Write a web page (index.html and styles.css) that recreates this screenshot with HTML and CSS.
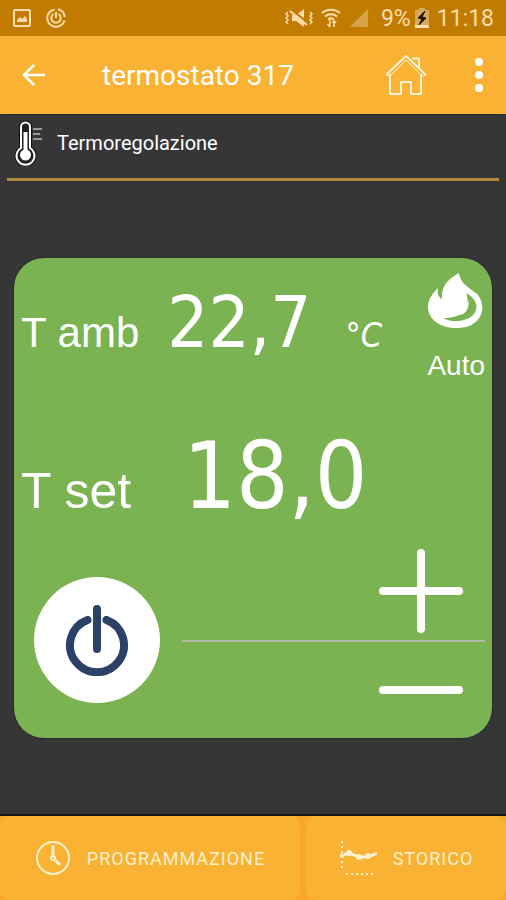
FILE: index.html
```
<!DOCTYPE html>
<html lang="it">
<head>
    <meta charset="UTF-8">
    <meta name="viewport" content="width=device-width, initial-scale=1.0">
    <title>termostato 317</title>
    <link rel="stylesheet" href="styles.css">
</head>
<body>
    <div class="status-bar">
        <div class="status-group">
            <svg width="20" height="20" viewBox="0 0 20 20" fill="none" stroke="currentColor" stroke-width="2">
                <rect x="2" y="2" width="16" height="16" rx="1"/>
                <path d="M5 14v-2l3-3 2 2 3-3 2 3v3z" fill="currentColor" stroke="none"/>
            </svg>
            <svg width="20" height="20" viewBox="0 0 20 20" fill="none" stroke="currentColor" stroke-width="2">
                <path d="M12 1.3A8.8 8.8 0 0 1 18.7 9M18.5 12.5A8.8 8.8 0 1 1 8.5 1.4"/>
                <path d="M7.5 6A4.7 4.7 0 1 0 12.500 6M10 4v6"/>
            </svg>
        </div>
        <div class="status-group">
            <svg class="mute" width="28" height="20" viewBox="0 0 28 20">
                <path d="M7 7h4l8-6v18l-8-6H7z" fill="currentColor"/>
                <path d="M6 1l17 14" stroke="#c17c00" stroke-width="2"/>
                <path d="M5 3l17 14" stroke="currentColor" stroke-width="2"/>
                <path d="M3 4l-2 2 2 2-2 2 2 2-2 2 2 2M25 4l2 2-2 2 2 2-2 2 2 2-2 2" fill="none" stroke="currentColor" stroke-width="1.500"/>
            </svg>
            <svg class="wifi" width="20" height="20" viewBox="0 0 20 20" fill="none" stroke="currentColor" stroke-width="2">
                <path d="M1 5c5-4.500 13-4.500 18 0M4 8.500c3.500-3 8.500-3 12 0M7 11.500c2-1.500 4-1.500 6 0"/>
                <path d="M9 12v6M6.500 16L9 19M13 19v-6M11.500 15l1.500-2 2 2" stroke-width="1.500"/>
            </svg>
            <svg class="signal" width="20" height="20" viewBox="0 0 20 20"><path d="M19 1v18H1z" fill="currentColor"/></svg>
            <span>9%</span>
            <svg width="14" height="20" viewBox="0 0 14 20">
                <path d="M0 2h4V0h6v2h4v18H0z" fill="#d9a85a"/>
                <path d="M0 17h14v3H0z" fill="currentColor"/>
                <path d="M10 3L3 10l4 1-3 6 7-7-4-1z" fill="#1d1200" stroke="#1d1200"/>
            </svg>
            <span class="clock">11:18</span>
        </div>
    </div>

    <header class="app-bar">
        <button class="icon-btn" aria-label="Indietro">
            <svg width="24" height="24" viewBox="0 0 24 24" fill="none" stroke="currentColor" stroke-width="2.500"><path d="M23 12H2M12 2L2 12l10 10"/></svg>
        </button>
        <h1>termostato 317</h1>
        <button class="icon-btn home-btn" aria-label="Home">
            <svg width="44" height="42" viewBox="0 0 44 42" fill="none" stroke="#fff3d6" stroke-width="2" stroke-linejoin="round">
                <path d="M6 20v20h11V28h10v12h10V20M2 21L22 2l20 19M28 4.500h7v9"/>
                <path d="M2 21l4 1L22 6l16 16 4-1" stroke-width="1"/>
            </svg>
        </button>
        <button class="icon-btn" aria-label="Menu">
            <svg width="10" height="36" viewBox="0 0 10 36" fill="currentColor"><circle cx="5" cy="5" r="4"/><circle cx="5" cy="18" r="4"/><circle cx="5" cy="31" r="4"/></svg>
        </button>
    </header>

    <section class="section-title">
        <svg width="30" height="46" viewBox="0 0 30 46">
            <path d="M7 28V7a4.500 4.500 0 0 1 9 0v21a9 9 0 1 1-9 0z" fill="#222" stroke="#111" stroke-width="4"/>
            <path d="M7 28V7a4.500 4.500 0 0 1 9 0v21a9 9 0 1 1-9 0z" fill="#222" stroke="#fff" stroke-width="2"/>
            <path d="M11.500 12v23" stroke="#fff" stroke-width="4"/>
            <circle cx="11.500" cy="35" r="5.500" fill="#fff"/>
            <path d="M19 9h9M19 14h7M19 19h9" stroke="#999" stroke-width="2"/>
        </svg>
        <h2>Termoregolazione</h2>
    </section>

    <main>
        <div class="thermostat">
            <div class="row ambient">
                <span class="label">T amb</span>
                <span class="lcd">22,7</span>
                <span class="unit">°C</span>
                <div class="mode">
                    <svg width="56" height="56" viewBox="0 0 56 56">
                        <path d="M31 1C32 11 41 16 49 22C60 34 54 55 31 56C12 57 0 47 0 35C0 27 5 21 10 16C9 22 11 26 14 27C13 14 20 7 31 1Z" fill="#fff"/>
                        <path d="M38 21C48 26 52 36 45 43C38 50 23 51 15 46C24 46 31 45 35 39C39 33 41 28 38 21Z" fill="#7bb352"/>
                        <path d="M29 43C32 41 33 39 32 36C37 36 40 31 40 27C42 34 39 44 29 43Z" fill="#fff"/>
                    </svg>
                    <span>Auto</span>
                </div>
            </div>
            <div class="row target">
                <span class="label">T set</span>
                <span class="lcd">18,0</span>
            </div>
            <div class="row controls">
                <button class="power" aria-label="Accendi o spegni">
                    <svg width="64" height="72" viewBox="0 0 64 72" fill="none" stroke="#2c4168" stroke-width="8" stroke-linecap="round">
                        <path d="M41.500 16a27 27 0 1 1-19 0M32 5v40"/>
                    </svg>
                </button>
                <div class="steps">
                    <button aria-label="Aumenta">
                        <svg width="84" height="84" viewBox="0 0 84 84" stroke="#fff" stroke-width="8" stroke-linecap="round"><path d="M42 4v76M4 42h76"/></svg>
                    </button>
                    <button aria-label="Diminuisci">
                        <svg width="84" height="84" viewBox="0 0 84 84" stroke="#fff" stroke-width="8" stroke-linecap="round"><path d="M4 42h76"/></svg>
                    </button>
                </div>
            </div>
        </div>
    </main>

    <nav class="bottom-nav">
        <button>
            <svg width="36" height="36" viewBox="0 0 36 36" fill="none" stroke="currentColor" stroke-width="2">
                <circle cx="18" cy="18" r="16"/><circle cx="18" cy="18" r="2"/>
                <path d="M18 5v11M20 20l5 5" stroke-width="3"/>
            </svg>
            PROGRAMMAZIONE
        </button>
        <button>
            <svg width="38" height="36" viewBox="0 0 38 36" fill="none" stroke="currentColor" stroke-width="2">
                <path d="M3 1v29M7 34h30" stroke-width="2" stroke-dasharray="2 3"/>
                <path d="M1 16l9-3 10 4h9l9-4" stroke-width="3"/>
                <g fill="currentColor" stroke="none"><circle cx="3" cy="16" r="2"/><circle cx="10" cy="13" r="3"/><circle cx="20" cy="17" r="3"/><circle cx="29" cy="16" r="3"/></g>
            </svg>
            STORICO
        </button>
    </nav>
</body>
</html>
```

FILE: styles.css
```
* {
    box-sizing: border-box;
}

body {
    font-family: Roboto, sans-serif;
    margin: 0;
    background-color: #363636;
    color: #fff;
    display: flex;
    flex-direction: column;
    min-height: 100vh;
}

button {
    background: none;
    border: none;
    padding: 0;
    color: inherit;
    font-family: inherit;
    cursor: pointer;
}

svg {
    display: block;
    flex-shrink: 0;
}

.status-bar {
    background-color: #c17c00;
    color: #fbdcae;
    height: 36px;
    padding: 0 12px;
    display: flex;
    justify-content: space-between;
    align-items: center;
    font-size: 23px;
}

.status-group {
    display: flex;
    align-items: center;
    gap: 8px;
}

.status-group:first-child {
    gap: 14px;
}

.signal {
    opacity: 0.4;
    margin-right: 4px;
}

.status-group span {
    margin-right: -4px;
}

.status-group .clock {
    margin: 0;
}

.app-bar {
    background-color: #f9b233;
    height: 78px;
    padding: 0 22px;
    display: flex;
    align-items: center;
}

.app-bar h1 {
    flex: 1;
    margin: 0 0 0 56px;
    font-size: 28px;
    font-weight: 400;
}

.home-btn {
    margin-right: 46px;
}

.section-title {
    border-top: 1px solid #22262e;
    border-bottom: 3px solid #b08a3e;
    margin: 0 7px;
    padding: 5px 7px 12px;
    display: flex;
    align-items: center;
    gap: 13px;
}

.section-title h2 {
    margin: 0;
    font-size: 20px;
    font-weight: 400;
}

main {
    flex: 1;
    padding: 14px;
    display: flex;
    flex-direction: column;
    justify-content: center;
}

.thermostat {
    background-color: #7bb352;
    border-radius: 30px;
    padding: 14px 7px 0;
    font-family: "Liberation Sans", Arial, sans-serif;
    box-shadow: 0 0 2px #1c1426;
}

.row {
    display: flex;
}

.ambient {
    min-height: 120px;
    align-items: baseline;
}

.label {
    font-size: 42px;
    white-space: nowrap;
}

.lcd {
    font-family: "DejaVu Sans Condensed", "DejaVu Sans", sans-serif;
    font-size: 72px;
    line-height: 100px;
    margin-left: 28px;
}

.unit {
    font-family: "DejaVu Sans Condensed", "DejaVu Sans", sans-serif;
    font-size: 34px;
    font-style: italic;
    margin-left: 34px;
}

.mode {
    margin-left: auto;
    align-self: flex-start;
    display: flex;
    flex-direction: column;
    align-items: center;
    gap: 20px;
    font-size: 28px;
    line-height: 36px;
}

.target {
    align-items: baseline;
    min-height: 150px;
    padding-top: 30px;
}

.target .label {
    font-size: 50px;
}

.target .lcd {
    font-size: 92px;
    line-height: 110px;
    margin-left: 52px;
}

.controls {
    align-items: center;
    gap: 22px;
    padding-left: 13px;
}

.power {
    background-color: #fff;
    border-radius: 50%;
    width: 126px;
    height: 126px;
    display: grid;
    place-items: center;
}

.steps {
    flex: 1;
    display: flex;
    flex-direction: column;
}

.steps button {
    height: 96px;
    padding-right: 22px;
    display: flex;
    justify-content: flex-end;
    align-items: center;
}

.steps button:first-child {
    border-bottom: 2px solid #b5b8ac;
    height: 100px;
}

.bottom-nav {
    background-color: #f9a727;
    border-top: 2px solid #17171f;
    display: flex;
    gap: 6px;
}

.bottom-nav button {
    background-color: #f9b233;
    border-radius: 10px;
    color: #fff0cd;
    height: 84px;
    flex: 3;
    display: flex;
    justify-content: center;
    align-items: center;
    gap: 16px;
    font-size: 18px;
    letter-spacing: 1px;
}

.bottom-nav button:last-child {
    flex: 2;
}
```
